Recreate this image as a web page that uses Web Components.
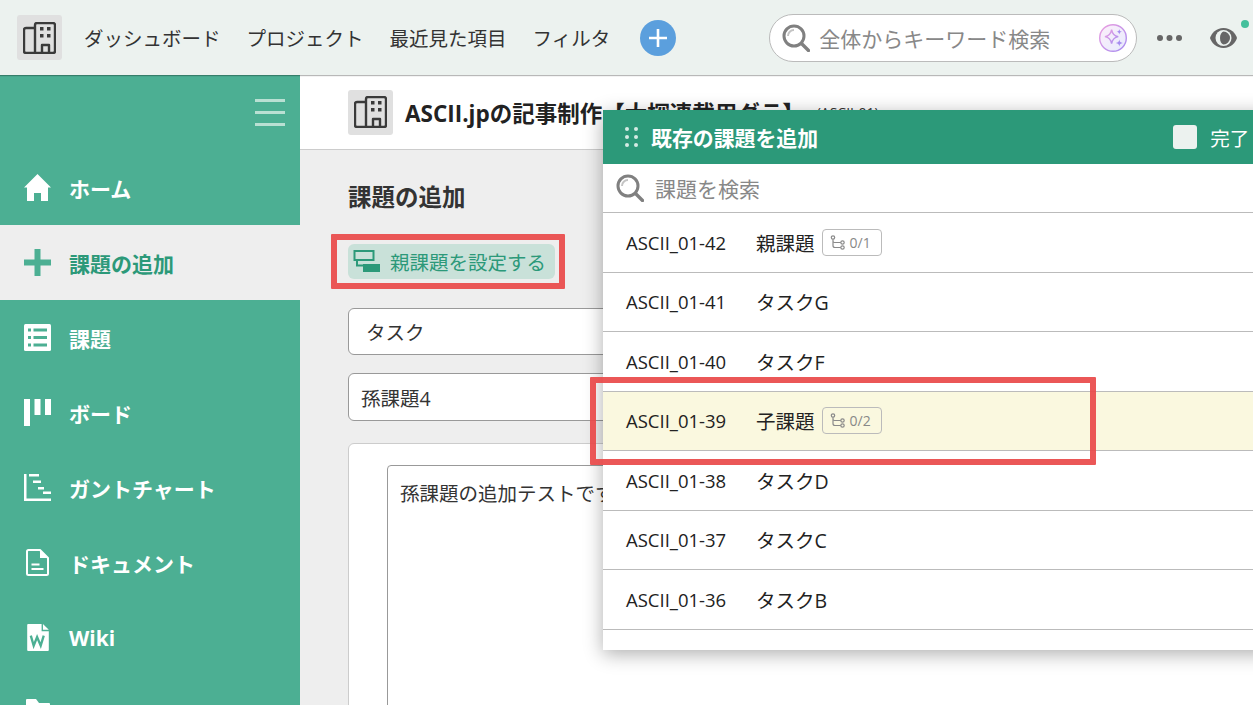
<!DOCTYPE html>
<html lang="ja">
<head>
<meta charset="utf-8">
<title>課題の追加</title>
<style>
  html, body { margin: 0; height: 705px; overflow: hidden; }
  body { font-family: "Open Sans", "Noto Sans CJK JP", sans-serif; color: #333; background: #eee; }
</style>
</head>
<body>
<app-shell></app-shell>
<script>
const BUILDING = `<svg viewBox="0 0 33 32" fill="none" stroke="currentColor" stroke-width="2.4" stroke-linejoin="round">
  <path d="M12 6H3a2 2 0 0 0-2 2v21a2 2 0 0 0 2 2h27a2 2 0 0 0 2-2V3a2 2 0 0 0-2-2H14a2 2 0 0 0-2 2v28"/>
  <path d="M19 31v-8h7v8"/>
  <path fill="currentColor" stroke="none" d="M17 5h3.5v3.5H17zM24 5h3.5v3.5H24zM17 12h3.5v3.5H17zM24 12h3.5v3.5H24z"/></svg>`

const SEARCH = `<svg viewBox="0 0 28 28" fill="none" stroke="#808080">
  <circle cx="12" cy="12" r="10" stroke-width="3"/>
  <path d="M19.5 19.5l7 7" stroke-width="3.4" stroke-linecap="round"/>
  <path d="M6 12a6 6 0 0 1 6-6" stroke="#c4c4c4" stroke-width="2"/></svg>`

const NAV_ICONS = {
  home: `<svg viewBox="0 0 27 27" fill="currentColor"><path d="M13.5 0L27 13.5h-3V27h-7v-8h-7v8H3V13.5H0z"/></svg>`,
  plus: `<svg viewBox="0 0 27 27" fill="currentColor"><path d="M10.5 0h6v10.5H27v6H16.500V27h-6V16.500H0v-6h10.500z"/></svg>`,
  list: `<svg viewBox="0 0 27 27"><rect width="27" height="27" rx="1.500" fill="currentColor"/><path fill="#4caf93" d="M4 4.500h3v3H4zM9.500 4.500H23v3H9.500zM4 12h3v3H4zM9.500 12H23v3H9.500zM4 19.500h3v3H4zM9.500 19.500H23v3H9.500z"/></svg>`,
  board: `<svg viewBox="0 0 27 27" fill="currentColor"><path d="M0 0h6v27H0zM10.500 0h6v16h-6zM21 0h6v16h-6z"/></svg>`,
  gantt: `<svg viewBox="0 0 27 27" fill="currentColor"><path d="M0 0h2.500v24.500H27V27H0zM5 0h10v2.500H5zM9 6.500h8V9H9zM14 13h6v2.500h-6zM19 17.500h8V20h-8z"/></svg>`,
  doc: `<svg viewBox="0 0 23 27" fill="none" stroke="currentColor" stroke-width="2" stroke-linejoin="round"><path d="M2.500 1H14l8 8v15.500a1.500 1.500 0 0 1-1.500 1.500h-18A1.500 1.500 0 0 1 1 24.500v-22A1.500 1.500 0 0 1 2.500 1z"/><path d="M14 1v8h8" fill="currentColor" stroke="none"/><path d="M5.500 15.500h8M5.500 20h12"/></svg>`,
  wiki: `<svg viewBox="0 0 24 30"><path fill="currentColor" d="M1 0h15v8h8v21a1 1 0 0 1-1 1H1a1 1 0 0 1-1-1V1a1 1 0 0 1 1-1zM17.500 0L24 6.500h-6.500z"/><path fill="none" stroke="#4caf93" stroke-width="2.600" d="M4 13l3.200 11 3.800-9.500L15 24l3.400-11"/></svg>`,
  folder: `<svg viewBox="0 0 24 27" fill="currentColor"><path d="M1 0h9l3 4h10a1 1 0 0 1 1 1v21a1 1 0 0 1-1 1H1a1 1 0 0 1-1-1V1a1 1 0 0 1 1-1z"/></svg>`
}

//top header
class TopBar extends HTMLElement{
  constructor(){
    super()
    this.attachShadow({mode: 'open'}).innerHTML = `
    <style>
      :host{ display:flex; align-items:center; height:75px; box-sizing:border-box; padding-left:17px; background:#ecf2ef; position:relative; z-index:2; box-shadow:0 1px 1px rgba(0,0,0,.28); }
      .tile{ width:45px; height:45px; border-radius:3px; background:#e0e0e0; color:#3a3a3a; display:flex; align-items:center; justify-content:center; margin-right:22px; }
      .tile svg{ width:33px; height:32px; }
      a{ font-size:19.500px; color:#333; margin-right:26px; white-space:nowrap; }
      .add{ width:36px; height:36px; border-radius:50%; background:#5b9fdd; margin-left:4px; display:flex; align-items:center; justify-content:center; }
      .add svg{ width:20px; height:20px; }
      .search{ width:368px; height:48px; box-sizing:border-box; margin-left:93px; border:1px solid #bbb; border-radius:24px; background:#fff; display:flex; align-items:center; padding-left:12px; }
      .search > svg{ width:28px; height:28px; margin-right:9px; flex:none; }
      .search span{ font-size:21px; color:#888; white-space:nowrap; flex:1; }
      .ai{ width:40px; height:40px; margin-right:6px; flex:none; }
      .dots{ width:27px; height:8px; margin-left:19px; flex:none; }
      .eye{ width:27px; height:20px; margin-left:27px; flex:none; }
      .live{ position:absolute; left:1241px; top:20px; width:8px; height:8px; border-radius:50%; background:#44c09c; }
    </style>
    <div class="tile">${BUILDING}</div>
    <a>ダッシュボード</a><a>プロジェクト</a><a>最近見た項目</a><a>フィルタ</a>
    <div class="add"><svg viewBox="0 0 20 20" fill="none" stroke="#fff" stroke-width="2.600"><path d="M10 1v18M1 10h18"/></svg></div>
    <div class="search">${SEARCH}<span>全体からキーワード検索</span>
      <svg class="ai" viewBox="0 0 40 40">
        <defs>
          <linearGradient id="ring" x1="0" y1="0" x2="1" y2="1"><stop offset="0" stop-color="#ec9fe0"/><stop offset="1" stop-color="#a58cf0"/></linearGradient>
          <linearGradient id="fill" x1="0" y1="0" x2="1" y2="1"><stop offset="0" stop-color="#fdeefa"/><stop offset="1" stop-color="#e6ebfd"/></linearGradient>
        </defs>
        <circle cx="20" cy="20" r="19" fill="url(#fill)" stroke="url(#ring)" stroke-width="2"/>
        <path d="M18 8c1 6 3.500 9 9.500 10-6 1-8.500 4-9.500 10-1-6-3.500-9-9.500-10 6-1 8.500-4 9.500-10z" fill="none" stroke="url(#ring)" stroke-width="2"/>
        <path fill="#a58cf0" d="M29 7c.4 2.600 1.400 3.600 4 4-2.600.4-3.600 1.400-4 4-.4-2.600-1.400-3.600-4-4 2.600-.4 3.600-1.400 4-4zM29 22c.6 3.400 1.600 4.400 5 5-3.400.6-4.400 1.600-5 5-.6-3.400-1.600-4.400-5-5 3.400-.6 4.400-1.600 5-5z"/>
      </svg>
    </div>
    <svg class="dots" viewBox="0 0 27 8" fill="#666"><circle cx="4" cy="4" r="3"/><circle cx="13.500" cy="4" r="3"/><circle cx="23" cy="4" r="3"/></svg>
    <svg class="eye" viewBox="0 0 27 20"><path fill="#666" d="M13.500 0C21 0 25.500 5.500 27 10c-1.500 4.500-6 10-13.500 10S1.500 14.500 0 10C1.500 5.500 6 0 13.500 0z"/><circle cx="13.500" cy="10" r="8" fill="#ecf2ef"/><path fill="#666" d="M13.500 3.500a6.500 6.500 0 0 1 0 13c-2-.5-3.500-3-3.500-6.500s1.500-6 3.500-6.500z"/></svg>
    <span class="live"></span>`
  }
}
customElements.define('top-bar', TopBar)

//one row of the sidebar
class NavItem extends HTMLElement{
  connectedCallback(){
    const w = this.getAttribute('w') || 27
    this.attachShadow({mode: 'open'}).innerHTML = `
    <style>
      :host{ display:flex; align-items:center; height:75px; color:#fff; flex:none; }
      :host([current]){ background:#eee; color:#2c9979; }
      .icon{ width:27px; height:27px; margin-left:24px; margin-right:18px; display:flex; justify-content:center; flex:none; }
      :host([current]) .icon{ color:#4caf93; }
      svg{ width:${w}px; height:27px; display:block; }
      span{ font-size:21px; font-weight:700; white-space:nowrap; }
    </style>
    <div class="icon">${NAV_ICONS[this.getAttribute('icon')]}</div><span><slot></slot></span>`
  }
}
customElements.define('nav-item', NavItem)

class SideNav extends HTMLElement{
  constructor(){
    super()
    this.attachShadow({mode: 'open'}).innerHTML = `
    <style>
      :host{ display:flex; flex-direction:column; width:300px; background:#4caf93; flex:none; overflow:hidden; }
      .burger{ height:75px; flex:none; box-sizing:border-box; padding:24px 15px 0 0; display:flex; justify-content:flex-end; }
      .burger i{ display:block; width:30px; height:27px; border-top:3px solid #b9e0d3; border-bottom:3px solid #b9e0d3; box-sizing:border-box; position:relative; }
      .burger i::after{ content:""; position:absolute; left:0; right:0; top:9px; height:3px; background:#b9e0d3; }
    </style>
    <div class="burger"><i></i></div>
    <slot></slot>`
  }
}
customElements.define('side-nav', SideNav)

class ProjectHead extends HTMLElement{
  constructor(){
    super()
    this.attachShadow({mode: 'open'}).innerHTML = `
    <style>
      :host{ display:flex; align-items:center; height:75px; box-sizing:border-box; padding-left:48px; background:#fff; border-bottom:1px solid #ccc; flex:none; }
      .tile{ width:45px; height:45px; border-radius:3px; background:#e0e0e0; color:#3a3a3a; display:flex; align-items:center; justify-content:center; margin-right:12px; }
      .tile svg{ width:33px; height:32px; }
      b{ font-size:22.500px; color:#222; white-space:nowrap; }
      small{ font-size:14px; color:#333; margin-left:12px; white-space:nowrap; }
    </style>
    <div class="tile">${BUILDING}</div>
    <b>ASCII.jpの記事制作【大探連載用グラ】</b><small>(ASCII-01)</small>`
  }
}
customElements.define('project-head', ProjectHead)

//the add-issue form behind the dialog
class IssueForm extends HTMLElement{
  constructor(){
    super()
    this.attachShadow({mode: 'open'}).innerHTML = `
    <style>
      :host{ display:block; padding:30px 0 0 48px; flex:1; overflow:hidden; }
      h2{ margin:0; font-size:23.500px; line-height:34px; font-weight:700; color:#333; }
      .parent{ display:inline-flex; align-items:center; height:35px; width:207px; box-sizing:border-box; margin-top:30px; padding-left:5px; background:#c9e1d9; border-radius:6px; color:#2c9979; font-size:19.500px; white-space:nowrap; }
      .parent svg{ width:27px; height:23px; margin-right:10px; flex:none; }
      .field{ width:1000px; box-sizing:border-box; background:#fff; border:1px solid #999; border-radius:6px; display:flex; align-items:center; font-size:19.500px; color:#333; }
      .kind{ height:47px; margin-top:29px; padding-left:17px; }
      .title{ height:48px; margin-top:18px; padding-left:12px; }
      .card{ width:1000px; height:400px; box-sizing:border-box; margin-top:22px; padding:21px 0 0 38px; background:#fff; border:1px solid #ccc; border-radius:6px; }
      .text{ width:900px; height:300px; box-sizing:border-box; padding:14px 0 0 12px; border:1px solid #999; border-radius:4px; font-size:19.500px; line-height:27px; color:#333; }
    </style>
    <h2>課題の追加</h2>
    <div class="parent"><svg viewBox="0 0 27 23" fill="none" stroke="#2c9979" stroke-width="2"><path d="M1.500 1h19v9h-19zM4 10v5.500h6"/><path fill="#2c9979" stroke="none" d="M10 14h17v8H10z"/></svg>親課題を設定する</div>
    <div class="field kind">タスク</div>
    <div class="field title">孫課題4</div>
    <div class="card"><div class="text">孫課題の追加テストです。</div></div>`
  }
}
customElements.define('issue-form', IssueForm)

//one issue in the dialog list
class IssueRow extends HTMLElement{
  connectedCallback(){
    const count = this.getAttribute('count')
    const badge = count ? `<span class="badge"><svg viewBox="0 0 15 15" fill="none" stroke="#8a8a8a" stroke-width="1.200"><circle cx="3" cy="2.500" r="1.700"/><circle cx="12.500" cy="7.500" r="1.700"/><circle cx="12.500" cy="12.500" r="1.700"/><path d="M3 4.200v6.300a2 2 0 0 0 2 2h5.800M3 6a1.500 1.500 0 0 0 1.500 1.500h6.300"/></svg>${count}</span>` : ''
    this.attachShadow({mode: 'open'}).innerHTML = `
    <style>
      :host{ display:flex; align-items:center; height:59.500px; box-sizing:border-box; padding-left:23px; border-bottom:1px solid #bbb; font-size:19.500px; color:#222; white-space:nowrap; flex:none; }
      :host([active]){ background:#faf8df; }
      .id{ width:130px; font-size:18.500px; flex:none; }
      .badge{ display:inline-flex; align-items:center; box-sizing:border-box; height:27px; width:60px; margin-left:7px; padding-left:7px; border:1px solid #bbb; border-radius:4px; font-size:14px; color:#888; }
      .badge svg{ width:15px; height:15px; margin-right:5px; }
    </style>
    <span class="id">${this.getAttribute('key')}</span><span><slot></slot></span>${badge}`
  }
}
customElements.define('issue-row', IssueRow)

//floating dialog, runs off the right edge in the shot
class IssueDialog extends HTMLElement{
  constructor(){
    super()
    this.attachShadow({mode: 'open'}).innerHTML = `
    <style>
      :host{ position:absolute; left:603px; top:110px; width:800px; height:540px; background:#fff; box-shadow:0 4px 18px rgba(0,0,0,.32); z-index:3; display:flex; flex-direction:column; overflow:hidden; }
      header{ height:54px; flex:none; background:#2c9979; display:flex; align-items:center; color:#fff; }
      header svg{ width:13px; height:22px; margin-left:22px; margin-right:13px; }
      h3{ margin:0; font-size:20.900px; font-weight:700; white-space:nowrap; }
      .check{ width:24px; height:24px; border-radius:3px; background:#ecf2ef; margin-left:355px; flex:none; }
      .done{ font-size:19.500px; margin-left:13px; white-space:nowrap; }
      .find{ height:49px; flex:none; box-sizing:border-box; border-bottom:1px solid #bbb; display:flex; align-items:center; padding-left:13px; font-size:21px; color:#888; white-space:nowrap; }
      .find svg{ width:28px; height:28px; margin-right:11px; }
    </style>
    <header>
      <svg viewBox="0 0 13 22" fill="#d5ebe4"><circle cx="2" cy="3" r="2"/><circle cx="11" cy="3" r="2"/><circle cx="2" cy="11" r="2"/><circle cx="11" cy="11" r="2"/><circle cx="2" cy="19" r="2"/><circle cx="11" cy="19" r="2"/></svg>
      <h3>既存の課題を追加</h3><span class="check"></span><span class="done">完了</span>
    </header>
    <div class="find">${SEARCH}課題を検索</div>
    <slot></slot>`
  }
}
customElements.define('issue-dialog', IssueDialog)

//red annotation frame drawn over the screenshot
class CallOut extends HTMLElement{
  connectedCallback(){
    const [x, y, w, h] = this.getAttribute('box').split(',')
    this.attachShadow({mode: 'open'}).innerHTML = `
    <style>
      :host{ position:absolute; left:${x}px; top:${y}px; width:${w}px; height:${h}px; box-sizing:border-box; border:6px solid rgba(233,73,73,.92); border-radius:1px; z-index:4; }
    </style>`
  }
}
customElements.define('call-out', CallOut)

class AppShell extends HTMLElement{
  constructor(){
    super()
    this.attachShadow({mode: 'open'}).innerHTML = `
    <style>
      :host{ display:flex; flex-direction:column; height:705px; position:relative; overflow:hidden; }
      .body{ display:flex; flex:1; min-height:0; }
      main{ flex:1; min-width:0; display:flex; flex-direction:column; background:#eee; }
    </style>
    <top-bar></top-bar>
    <div class="body">
      <side-nav>
        <nav-item icon="home">ホーム</nav-item>
        <nav-item icon="plus" current>課題の追加</nav-item>
        <nav-item icon="list">課題</nav-item>
        <nav-item icon="board">ボード</nav-item>
        <nav-item icon="gantt">ガントチャート</nav-item>
        <nav-item icon="doc" w="23">ドキュメント</nav-item>
        <nav-item icon="wiki" w="24">Wiki</nav-item>
        <nav-item icon="folder" w="24">ファイル</nav-item>
      </side-nav>
      <main>
        <project-head></project-head>
        <issue-form></issue-form>
      </main>
    </div>
    <issue-dialog>
      <issue-row key="ASCII_01-42" count="0/1">親課題</issue-row>
      <issue-row key="ASCII_01-41">タスクG</issue-row>
      <issue-row key="ASCII_01-40">タスクF</issue-row>
      <issue-row key="ASCII_01-39" count="0/2" active>子課題</issue-row>
      <issue-row key="ASCII_01-38">タスクD</issue-row>
      <issue-row key="ASCII_01-37">タスクC</issue-row>
      <issue-row key="ASCII_01-36">タスクB</issue-row>
    </issue-dialog>
    <call-out box="331,234,234,55"></call-out>
    <call-out box="590,377,506,88"></call-out>`
  }
}
customElements.define('app-shell', AppShell)
</script>
</body>
</html>
